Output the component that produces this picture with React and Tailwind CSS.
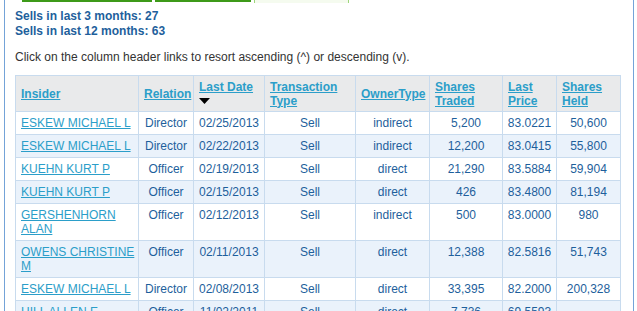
import React from "react";

const rows = [
  { name: "ESKEW MICHAEL L", rel: "Director", date: "02/25/2013", type: "Sell", owner: "indirect", traded: "5,200", price: "83.0221", held: "50,600" },
  { name: "ESKEW MICHAEL L", rel: "Director", date: "02/22/2013", type: "Sell", owner: "indirect", traded: "12,200", price: "83.0415", held: "55,800" },
  { name: "KUEHN KURT P", rel: "Officer", date: "02/19/2013", type: "Sell", owner: "direct", traded: "21,290", price: "83.5884", held: "59,904" },
  { name: "KUEHN KURT P", rel: "Officer", date: "02/15/2013", type: "Sell", owner: "direct", traded: "426", price: "83.4800", held: "81,194" },
  { name: "GERSHENHORN ALAN", rel: "Officer", date: "02/12/2013", type: "Sell", owner: "indirect", traded: "500", price: "83.0000", held: "980" },
  { name: "OWENS CHRISTINE M", rel: "Officer", date: "02/11/2013", type: "Sell", owner: "direct", traded: "12,388", price: "82.5816", held: "51,743" },
  { name: "ESKEW MICHAEL L", rel: "Director", date: "02/08/2013", type: "Sell", owner: "direct", traded: "33,395", price: "82.2000", held: "200,328" },
  { name: "HILL ALLEN E", rel: "Officer", date: "11/02/2011", type: "Sell", owner: "direct", traded: "7,736", price: "69.5593", held: "" },
];

// header link style
const hl = "text-[#2b9ec9] underline font-bold";
const th = "border border-[#c8dbee] px-[5px] py-[3px] text-left align-middle font-normal";
const td = "border border-[#c8dbee] px-[4px] py-[4px] align-top text-center";

export default function App() {
  return (
    <div className="w-[637px] h-[311px] overflow-hidden bg-white font-['Liberation_Sans',Arial,sans-serif] text-[12px] leading-[14px]">
      <div className="ml-[4px] w-[630px] h-[311px] border-l border-r border-[#74a3d8] pl-[10px]">
        {/* tab bars cut off at the top */}
        <div className="flex h-[3px] pl-[7px] gap-[3px]">
          <div className="w-[130px] h-[2px] bg-[#3d9a19]" />
          <div className="w-[96px] h-[2px] bg-[#3d9a19]" />
          <div className="w-[95px] h-[3px] bg-[#f5fbef] border-l border-r border-[#9fd67c]" />
        </div>

        <div className="mt-[6px] font-bold text-[#1e5f9c] leading-[15px]">
          <div>Sells in last 3 months: 27</div>
          <div>Sells in last 12 months: 63</div>
        </div>

        <p className="mt-[11px] text-[#333333]">
          Click on the column header links to resort ascending (^) or descending (v).
        </p>

        <table className="mt-[11px] w-[605px] table-fixed border-collapse text-[#1e5f9c]">
          <colgroup>
            <col className="w-[123px]" />
            <col className="w-[55px]" />
            <col className="w-[71px]" />
            <col className="w-[91px]" />
            <col className="w-[74px]" />
            <col className="w-[73px]" />
            <col className="w-[54px]" />
            <col className="w-[64px]" />
          </colgroup>
          <thead>
            <tr className="h-[36px] bg-[#e9eaeb]">
              <th className={th}><span className={hl}>Insider</span></th>
              <th className={th + " px-[4px]"}><span className={hl}>Relation</span></th>
              <th className={th}>
                <div className={hl}>Last Date</div>
                <svg width="11" height="14" viewBox="0 0 11 14" className="block">
                  <polygon points="0,4 11,4 5.5,10" fill="#000" />
                </svg>
              </th>
              <th className={th}><span className={hl}>Transaction Type</span></th>
              <th className={th}><span className={hl}>OwnerType</span></th>
              <th className={th}><span className={hl}>Shares Traded</span></th>
              <th className={th}><span className={hl}>Last Price</span></th>
              <th className={th}><span className={hl}>Shares Held</span></th>
            </tr>
          </thead>
          <tbody>
            {rows.map((r, i) => (
              <tr key={i} className={i % 2 === 0 ? "bg-white" : "bg-[#eaf2fb]"}>
                <td className="border border-[#c8dbee] pl-[5px] pr-0 py-[4px] align-top text-left">
                  <span className="text-[#2b9ec9] underline">{r.name}</span>
                </td>
                <td className={td}>{r.rel}</td>
                <td className={td}>{r.date}</td>
                <td className={td}>{r.type}</td>
                <td className={td}>{r.owner}</td>
                <td className={td}>{r.traded}</td>
                <td className={td}>{r.price}</td>
                <td className={td}>{r.held}</td>
              </tr>
            ))}
          </tbody>
        </table>
      </div>
    </div>
  );
}
